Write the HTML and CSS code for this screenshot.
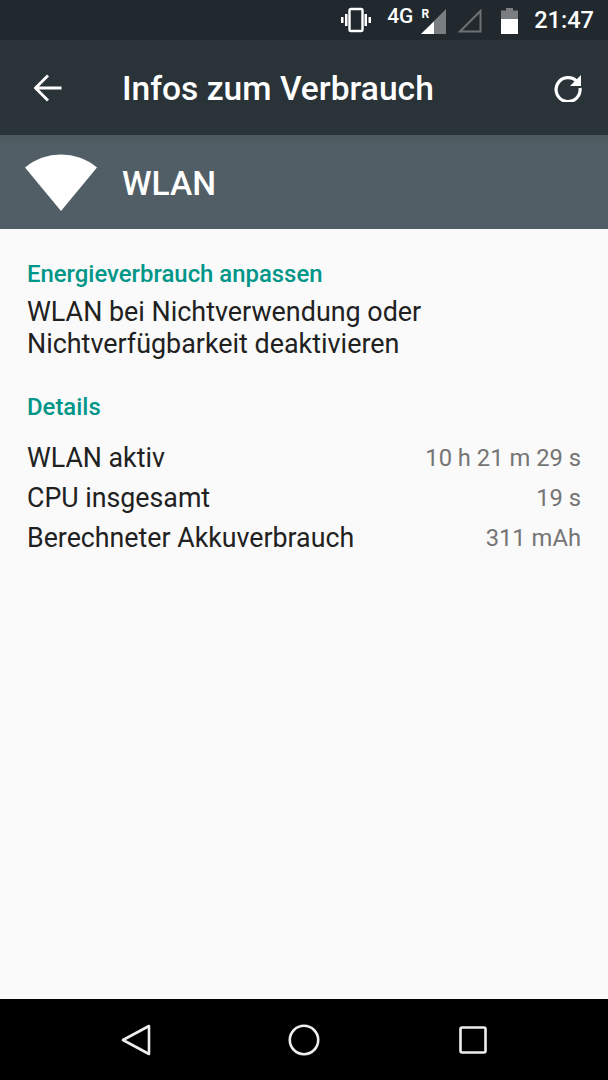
FILE: index.html
```html
<!DOCTYPE html>
<html lang="de">
<head>
  <meta charset="UTF-8">
  <title>Infos zum Verbrauch</title>
  <link rel="stylesheet" href="styles.css">
</head>
<body>

<div class="status-bar">
  <svg class="ic-vibrate" width="32" height="26" viewBox="0 0 32 26">
    <rect x="9.500" y="2" width="13" height="22" rx="1.500" fill="none" stroke="#fff" stroke-width="2.400"/>
    <rect x="5" y="7" width="2.500" height="12" fill="#fff"/>
    <rect x="24.500" y="7" width="2.500" height="12" fill="#fff"/>
    <rect x="1" y="10" width="2.500" height="6" fill="#fff"/>
    <rect x="28.500" y="10" width="2.500" height="6" fill="#fff"/>
  </svg>
  <span class="net">4G</span>
  <span class="roam">R</span>
  <svg class="ic-signal" width="26" height="26" viewBox="0 0 26 26">
    <path d="M25 0V25H0Z" fill="#7b7e80"/>
    <path d="M13 12.500V25H0Z" fill="#fff"/>
  </svg>
  <svg class="ic-signal2" width="24" height="26" viewBox="0 0 24 26">
    <path d="M22.500 3V23.500H2Z" fill="none" stroke="#6e7275" stroke-width="2"/>
  </svg>
  <svg class="ic-battery" width="17" height="26" viewBox="0 0 17 26">
    <path d="M5 0H12V2.500H17V26H0V2.500H5Z" fill="#7b7e80"/>
    <rect y="11" width="17" height="15" fill="#fff"/>
  </svg>
  <span class="clock">21:47</span>
</div>

<header class="toolbar">
  <svg class="ic-back" width="28" height="28" viewBox="0 0 28 28">
    <path d="M27.500 14H2M14 1.500L1.500 14L14 26.500" fill="none" stroke="#fff" stroke-width="2.800"/>
  </svg>
  <h1>Infos zum Verbrauch</h1>
  <svg class="ic-refresh" width="28" height="28" viewBox="0 0 28 28">
    <path d="M23 7.500A12 12 0 1 0 26 14" fill="none" stroke="#fff" stroke-width="3.200"/>
    <path d="M27 1V12H16Z" fill="#fff"/>
  </svg>
</header>

<div class="app-head">
  <svg class="ic-wifi" width="72" height="57" viewBox="0 0 72 57">
    <path d="M0 13.500A56 56 0 0 1 72 13.500L36 57Z" fill="#fff"/>
  </svg>
  <h2>WLAN</h2>
</div>

<main class="content">
  <h3 class="sec-title">Energieverbrauch anpassen</h3>
  <p class="hint">WLAN bei Nichtverwendung oder Nichtverfügbarkeit deaktivieren</p>

  <h3 class="sec-title details">Details</h3>
  <div class="row"><span>WLAN aktiv</span><span class="val">10 h 21 m 29 s</span></div>
  <div class="row"><span>CPU insgesamt</span><span class="val">19 s</span></div>
  <div class="row"><span>Berechneter Akkuverbrauch</span><span class="val">311 mAh</span></div>
</main>

<nav class="nav-bar">
  <svg width="30" height="32" viewBox="0 0 30 32">
    <path d="M28 2V30L2 16Z" fill="none" stroke="#eee" stroke-width="2.600" stroke-linejoin="round"/>
  </svg>
  <svg class="ic-home" width="32" height="32" viewBox="0 0 32 32">
    <circle cx="16" cy="16" r="14.200" fill="none" stroke="#eee" stroke-width="2.600"/>
  </svg>
  <svg width="28" height="28" viewBox="0 0 28 28">
    <rect x="1.500" y="1.500" width="25" height="25" rx="1.500" fill="none" stroke="#eee" stroke-width="2.600"/>
  </svg>
</nav>

</body>
</html>
```

FILE: styles.css
```css
* {
  box-sizing: border-box;
}
html, body {
  margin: 0;
  padding: 0;
}
body {
  width: 608px;
  height: 1080px;
  display: flex;
  flex-direction: column;
  font-family: Roboto, sans-serif;
  background-color: #fafafa;
  overflow: hidden;
}
.status-bar {
  height: 40px;
  background-color: #21292e;
  color: #fff;
  display: flex;
  align-items: center;
  justify-content: flex-end;
  padding-right: 14px;
}
.ic-vibrate {
  margin-right: 15px;
}
.net {
  font-size: 21px;
  font-weight: 500;
  margin-top: -8px;
  margin-right: 8px;
}
.roam {
  font-size: 12px;
  font-weight: 700;
  margin-top: -12px;
  margin-right: -8px;
}
.ic-signal {
  margin-top: 4px;
  margin-right: 11px;
}
.ic-signal2 {
  margin-top: 2px;
  margin-right: 19px;
}
.ic-battery {
  margin-top: 2px;
  margin-right: 16px;
}
.clock {
  font-size: 23.600px;
  font-weight: 500;
}
.toolbar {
  height: 95px;
  background-color: #293338;
  color: #fff;
  display: flex;
  align-items: center;
  padding: 0 26px 0 34px;
}
.toolbar h1 {
  flex: 1;
  margin: 0 0 0 60px;
  padding-top: 2px;
  font-size: 33.600px;
  font-weight: 500;
}
.app-head {
  height: 94px;
  background: linear-gradient(#4c595f, #515e65 12px);
  color: #fff;
  display: flex;
  align-items: center;
  padding-left: 25px;
}
.app-head h2 {
  margin: 0 0 0 25px;
  padding-top: 2px;
  font-size: 33.600px;
  font-weight: 500;
}
.content {
  flex: 1;
  padding: 31px 27px 0 27px;
  color: #212121;
}
.sec-title {
  margin: 0;
  font-size: 23.900px;
  line-height: 28px;
  font-weight: 500;
  color: #009688;
}
.hint {
  margin: 8px 0 0 0;
  font-size: 26.900px;
  line-height: 32px;
}
.details {
  margin-top: 33px;
  margin-bottom: 17px;
}
.row {
  display: flex;
  justify-content: space-between;
  font-size: 26.750px;
  line-height: 40px;
}
.val {
  font-size: 23.750px;
  color: #757575;
}
.nav-bar {
  height: 81px;
  background-color: #000;
  display: flex;
  align-items: center;
  justify-content: space-between;
  padding: 0 121px;
}
.ic-home {
  margin-right: 2px;
}
```
